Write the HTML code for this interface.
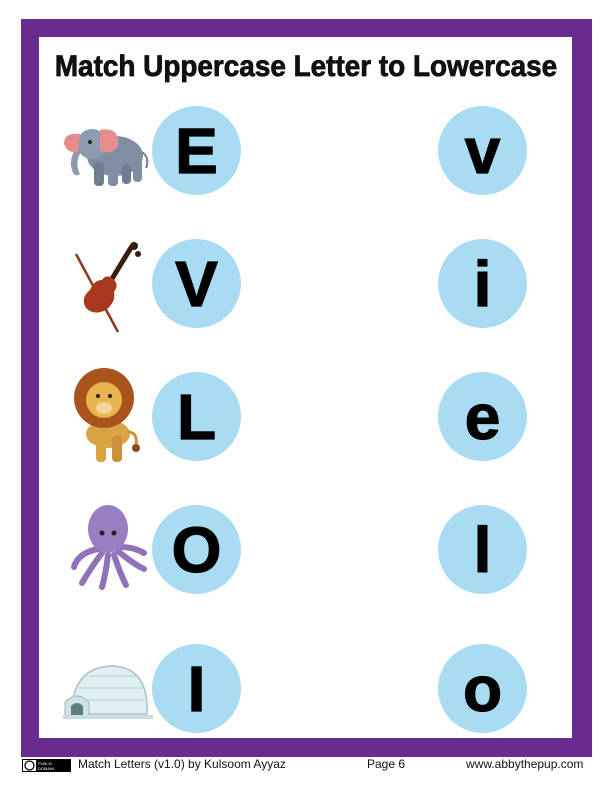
<!DOCTYPE html>
<html><head><meta charset="utf-8"><style>
html,body{margin:0;padding:0;background:#fff;}
body{width:612px;height:792px;position:relative;overflow:hidden;font-family:"Liberation Sans",sans-serif;}
.frame{position:absolute;left:21px;top:19px;width:571px;height:738px;background:#682c91;}
.inner{position:absolute;left:39px;top:37px;width:533px;height:701px;background:#fff;}
.title{position:absolute;left:0;width:612px;top:50px;text-align:center;font-weight:bold;font-size:30px;color:#111;transform:scaleX(0.93);transform-origin:306px 0;white-space:nowrap;-webkit-text-stroke:0.8px #111;}
.c{position:absolute;width:89px;height:89px;border-radius:50%;background:#a9dcf3;text-align:center;font-weight:bold;color:#000;font-size:64px;line-height:91px;-webkit-text-stroke:1.2px #000;}
.f{position:absolute;top:757px;font-size:12px;color:#111;}
svg{position:absolute;}
</style></head><body>
<div class="frame"></div><div class="inner"></div>
<div class="title">Match Uppercase Letter to Lowercase</div>

<div class="c" style="left:152px;top:106px">E</div>
<div class="c" style="left:152px;top:239px">V</div>
<div class="c" style="left:152px;top:372px">L</div>
<div class="c" style="left:152px;top:505px">O</div>
<div class="c" style="left:152px;top:644px">I</div>
<div class="c" style="left:438px;top:106px">v</div>
<div class="c" style="left:438px;top:239px">i</div>
<div class="c" style="left:438px;top:372px">e</div>
<div class="c" style="left:438px;top:505px">l</div>
<div class="c" style="left:438px;top:644px">o</div>

<!-- elephant -->
<svg style="left:60px;top:122px" width="92" height="68" viewBox="0 0 92 68">
<ellipse cx="55" cy="34" rx="28" ry="20" fill="#7f8ea3"/>
<rect x="34" y="40" width="10" height="24" rx="4" fill="#6f7d92"/>
<rect x="48" y="42" width="10" height="22" rx="4" fill="#7f8ea3"/>
<rect x="62" y="42" width="9" height="20" rx="4" fill="#6f7d92"/>
<rect x="73" y="38" width="9" height="22" rx="4" fill="#7f8ea3"/>
<circle cx="32" cy="22" r="15" fill="#8d9bb0"/>
<path d="M22 28 Q14 40 20 52 Q14 56 12 48 Q8 36 18 24Z" fill="#8d9bb0"/>
<path d="M40 8 Q60 4 58 24 Q52 34 40 28Z" fill="#e88b8b"/>
<path d="M20 12 Q4 10 4 22 Q8 32 18 30Z" fill="#e88b8b"/>
<path d="M82 30 Q90 36 86 46" stroke="#6f7d92" stroke-width="2" fill="none"/>
<circle cx="30" cy="20" r="2" fill="#222"/>
</svg>
<!-- violin -->
<svg style="left:72px;top:240px" width="70" height="95" viewBox="0 0 70 95">
<line x1="4" y1="14" x2="46" y2="92" stroke="#8b3a1a" stroke-width="2.5"/>
<path d="M60 6 L38 42" stroke="#3a1d0e" stroke-width="5"/>
<path d="M40 38 Q48 44 42 52 Q44 62 34 70 Q22 76 14 68 Q8 58 18 50 Q22 40 30 40 Q34 34 40 38Z" fill="#a8391c"/>
<circle cx="62" cy="6" r="4" fill="#3a1d0e"/>
<circle cx="66" cy="14" r="3" fill="#3a1d0e"/>
</svg>
<!-- lion -->
<svg style="left:72px;top:366px" width="80" height="100" viewBox="0 0 80 100">
<ellipse cx="36" cy="68" rx="22" ry="14" fill="#d9a441"/>
<rect x="24" y="70" width="10" height="26" rx="4" fill="#d9a441"/>
<rect x="40" y="70" width="10" height="26" rx="4" fill="#c9923a"/>
<path d="M56 66 Q66 66 64 80" stroke="#c9923a" stroke-width="3" fill="none"/>
<circle cx="64" cy="82" r="4" fill="#8b4a1a"/>
<circle cx="32" cy="32" r="30" fill="#a9541c"/>
<circle cx="32" cy="34" r="18" fill="#e8b250"/>
<ellipse cx="32" cy="42" rx="8" ry="6" fill="#f2d39a"/>
<circle cx="26" cy="30" r="2" fill="#222"/><circle cx="38" cy="30" r="2" fill="#222"/>
</svg>
<!-- octopus -->
<svg style="left:68px;top:503px" width="82" height="88" viewBox="0 0 82 88">
<g stroke="#8f72b8" stroke-width="6" fill="none" stroke-linecap="round">
<path d="M30 46 Q10 50 6 64"/><path d="M34 50 Q22 66 14 80"/><path d="M40 52 Q38 70 34 84"/>
<path d="M46 52 Q52 70 58 82"/><path d="M50 48 Q64 60 76 66"/><path d="M52 44 Q66 44 76 50"/>
</g>
<ellipse cx="40" cy="26" rx="20" ry="24" fill="#9a7ec2"/>
<circle cx="34" cy="30" r="2.5" fill="#222"/><circle cx="46" cy="30" r="2.5" fill="#222"/>
</svg>
<!-- igloo -->
<svg style="left:63px;top:660px" width="90" height="60" viewBox="0 0 90 60">
<path d="M8 54 Q10 6 50 6 Q86 8 84 54Z" fill="#dfeff2" stroke="#a7c3c8" stroke-width="1.5"/>
<g stroke="#b7cdd2" stroke-width="1"><line x1="12" y1="40" x2="82" y2="40"/><line x1="16" y1="28" x2="80" y2="28"/><line x1="26" y1="16" x2="74" y2="16"/></g>
<path d="M2 56 L2 42 Q14 30 26 42 L26 56Z" fill="#cfe3e7" stroke="#9db8bd"/>
<path d="M8 56 L8 46 Q14 40 20 46 L20 56Z" fill="#5c7d84"/>
<rect x="0" y="55" width="90" height="4" fill="#c9dde1"/>
</svg>

<svg style="left:22px;top:759px" width="49" height="13" viewBox="0 0 49 13">
<rect width="49" height="13" fill="#000"/><rect x="1" y="1" width="13" height="11" fill="#fff"/>
<circle cx="7.5" cy="6.5" r="4.5" fill="none" stroke="#000" stroke-width="1.3"/>
<text x="16" y="6" font-size="4" fill="#fff" font-family="Liberation Sans">PUBLIC</text>
<text x="16" y="11" font-size="4" fill="#fff" font-family="Liberation Sans">DOMAIN</text>
</svg>
<div class="f" style="left:78px">Match Letters (v1.0) by Kulsoom Ayyaz</div>
<div class="f" style="left:367px">Page 6</div>
<div class="f" style="left:466px">www.abbythepup.com</div>
</body></html>
